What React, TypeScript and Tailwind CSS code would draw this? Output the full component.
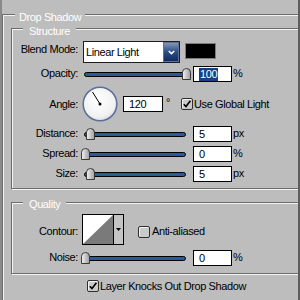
import React from 'react';

type Children = { children?: React.ReactNode };

const Check = () => (
  <svg width="10" height="10" viewBox="0 0 10 10">
    <path d="M1.8 5.2 L4 7.6 L8.4 1.8" fill="none" stroke="#000" strokeWidth="1.6" />
  </svg>
);

const CheckBox = ({ checked }: { checked?: boolean }) => (
  <div className='flex h-[12px] w-[12px] shrink-0 items-center justify-center rounded-[2px] border border-[#2e2e2e] bg-[#cacaca] shadow-[inset_1px_1px_0_#f4f4f4]'>
    {checked && <Check />}
  </div>
);

const Group = ({ title, className, children }: Children & { title: string; className?: string }) => (
  <div className={`border border-[#6c6c6c] shadow-[inset_1px_1px_0_#f4f4f4,1px_1px_0_#f4f4f4] ${className}`}>
    <div className='w-fit bg-[#bdbdbd] leading-[13px] text-white'>{title}</div>
    {children}
  </div>
);

const Label = ({ children, className = '' }: Children & { className?: string }) => (
  <div className={`w-[66px] shrink-0 text-right leading-[13px] ${className}`}>{children}</div>
);

const Thumb = () => (
  <svg width="9" height="12" viewBox="0 0 9 12">
    <defs>
      <linearGradient id="thumb" x1="0" x2="1" y1="0" y2="0">
        <stop offset="0" stopColor="#f2f2f2" />
        <stop offset="1" stopColor="#9c9c9c" />
      </linearGradient>
    </defs>
    <path d="M0.5 11.5 V4.2 Q0.5 0.5 4.5 0.5 Q8.5 0.5 8.5 4.2 V11.5 Z" fill="url(#thumb)" stroke="#3a3a3a" />
  </svg>
);

const Slider = ({ value }: { value: number }) => (
  <div className='relative ml-[3px] h-[16px] w-[112px] shrink-0'>
    <div className='ml-[3px] mt-[6px] h-[5px] w-[102px] rounded-full border border-black bg-[#2b5a97]' />
    <div className='absolute top-[2px] flex' style={{ left: Math.round(value * 1.01) }}>
      <Thumb />
    </div>
  </div>
);

const Field = ({ children, className = 'w-[39px]' }: Children & { className?: string }) => (
  <div className={`flex h-[16px] shrink-0 items-center border border-black bg-white pl-[5px] leading-[13px] ${className}`}>
    {children}
  </div>
);

const SliderRow = ({ label, value, unit, selected }: { label: string; value: number; unit: string; selected?: boolean }) => (
  <div className='flex h-[16px] items-center'>
    <Label className='-mt-[1px]'>{label}</Label>
    <Slider value={value} />
    <Field>
      {selected ? <span className='bg-[#15418a] px-[1px] text-white'>{value}</span> : value}
    </Field>
    <div className='-mt-[1px] ml-[1px] leading-[13px]'>{unit}</div>
  </div>
);

const Dial = () => (
  <svg width="36" height="36" viewBox="0 0 36 36" className='ml-[4px] shrink-0'>
    <defs>
      <radialGradient id="dial" cx="45%" cy="40%" r="65%">
        <stop offset="0" stopColor="#ffffff" />
        <stop offset="0.75" stopColor="#f1f1f1" />
        <stop offset="1" stopColor="#d2d2d2" />
      </radialGradient>
    </defs>
    <circle cx="18" cy="18" r="16.8" fill="url(#dial)" stroke="#5b6f9b" strokeWidth="1.5" />
    <line x1="18" y1="18" x2="10.5" y2="6" stroke="#000" strokeWidth="1" />
    <circle cx="18" cy="18" r="1.5" fill="#000" />
  </svg>
);

const Contour = () => (
  <div className='ml-[4px] flex h-[31px] w-[42px] shrink-0 border border-black'>
    <svg width="30" height="29" viewBox="0 0 30 29">
      <rect width="30" height="29" fill="#fff" />
      <polygon points="0,29 30,0 30,29" fill="#7a7a7a" />
    </svg>
    <div className='flex w-[10px] items-center justify-center border-l border-black bg-[#c4c4c4]'>
      <svg width="5" height="3" viewBox="0 0 5 3">
        <polygon points="0,0 5,0 2.5,3" fill="#000" />
      </svg>
    </div>
  </div>
);

export default function App() {
  return (
    <div className="h-[300px] w-[300px] overflow-hidden border-l-2 border-r-2 border-l-[#8a8a8a] border-r-[#5e5e5e] bg-[#bdbdbd] font-['Liberation_Sans',Arial,sans-serif] text-[11px] tracking-[-0.4px] text-black">
      <div className='mt-[14px] w-[320px] border border-[#6c6c6c] pb-[20px] shadow-[inset_1px_1px_0_#f4f4f4,1px_1px_0_#f4f4f4]'>
        <div className='-mt-[4px] ml-[12px] w-fit bg-[#bdbdbd] px-[4px] leading-[13px] text-white'>Drop Shadow</div>

        <div className='ml-[8px] mt-[4px] w-[300px] border border-[#6c6c6c] pb-[6px] shadow-[inset_1px_1px_0_#f4f4f4,1px_1px_0_#f4f4f4]'>
          <div className='-mt-[4px] ml-[11px] w-fit bg-[#bdbdbd] px-[6px] leading-[13px] text-white'>Structure</div>

          <div className='mt-[3px] flex h-[22px] items-start'>
            <Label className='mt-[2px]'>Blend Mode:</Label>
            <div className='ml-[5px] flex h-[22px] w-[97px] shrink-0 border border-[#1e1e1e] bg-white'>
              <div className='flex-1 pl-[2px] leading-[20px]'>Linear Light</div>
              <div className='flex w-[16px] items-center justify-center border border-[#5d6f96] bg-gradient-to-b from-[#8595b6] via-[#2a4c86] to-[#0f2c66]'>
                <svg width="7" height="5" viewBox="0 0 7 5">
                  <polyline points="0.8,1 3.5,3.6 6.2,1" fill="none" stroke="#fff" strokeWidth="1.6" />
                </svg>
              </div>
            </div>
            <div className='ml-[5px] mt-[2px] h-[16px] w-[31px] border border-[#7c7c7c] bg-black' />
          </div>

          <div className='mt-[3px]'>
            <SliderRow label='Opacity:' value={100} unit='%' selected />
          </div>

          <div className='mt-[4px] flex h-[36px] items-center'>
            <Label>Angle:</Label>
            <Dial />
            <Field className='ml-[5px] w-[40px]'>120</Field>
            <div className='ml-[3px] w-[15px] self-start pt-[10px] leading-[13px]'>°</div>
            <CheckBox checked />
            <div className='ml-[1px] leading-[13px]'>Use Global Light</div>
          </div>

          <div className='mt-[4px] flex flex-col gap-[4px]'>
            <SliderRow label='Distance:' value={5} unit='px' />
            <SliderRow label='Spread:' value={0} unit='%' />
            <SliderRow label='Size:' value={5} unit='px' />
          </div>
        </div>

        <div className='ml-[8px] mt-[13px] w-[300px] border border-[#6c6c6c] pb-[7px] shadow-[inset_1px_1px_0_#f4f4f4,1px_1px_0_#f4f4f4]'>
          <div className='-mt-[5px] ml-[11px] w-fit bg-[#bdbdbd] px-[6px] leading-[13px] text-white'>Quality</div>

          <div className='mt-[3px] flex h-[31px] items-start'>
            <Label className='mt-[11px]'>Contour:</Label>
            <Contour />
            <div className='ml-[14px] mt-[11px] flex items-center'>
              <CheckBox />
              <div className='ml-[2px] leading-[13px]'>Anti-aliased</div>
            </div>
          </div>

          <div className='mt-[5px]'>
            <SliderRow label='Noise:' value={0} unit='%' />
          </div>
        </div>

        <div className='ml-[84px] mt-[6px] flex h-[12px] items-center'>
          <CheckBox checked />
          <div className='ml-[1px] leading-[13px]'>Layer Knocks Out Drop Shadow</div>
        </div>
      </div>
    </div>
  );
}
